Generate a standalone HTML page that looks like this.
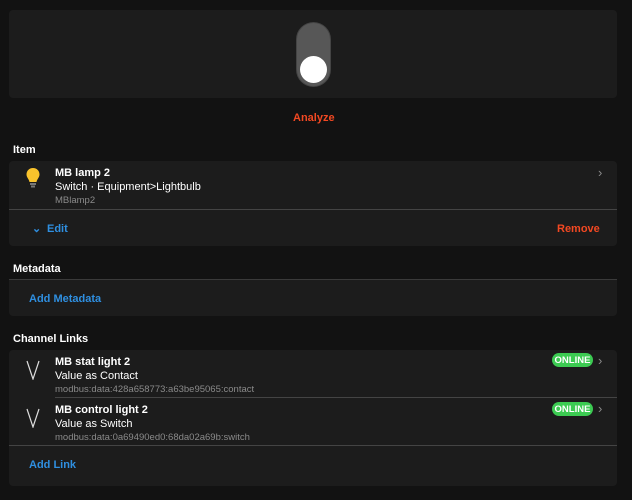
<!DOCTYPE html>
<html><head><style>
body{margin:0;width:632px;height:500px;background:#121212;font-family:"Liberation Sans",sans-serif;color:#fff;position:relative;overflow:hidden;font-size:11px}
.a{position:absolute}
.card{position:absolute;left:9px;width:608px;background:#1c1c1c;border-radius:4px}
.h{font-weight:bold;font-size:11px;left:13px}
.t{font-weight:bold;font-size:11px}
.g{color:#8a8a8a;font-size:9.5px}
.blue{color:#2f8fe0}
.hr{position:absolute;height:1px;background:#3a3a3a}
.on{position:absolute;left:552px;width:41px;height:14px;border-radius:7px;background:#3ccb52;color:#fff;font-weight:bold;font-size:9.5px;text-align:center;line-height:15px}
.chev{position:absolute;left:598px;color:#8a8a8a;font-size:13px}
</style></head><body>
<div class="card" style="top:10px;height:88px"></div>
<div class="a" style="left:297px;top:23px;width:33px;height:63px;border-radius:17px;background:#575757;box-shadow:0 0 0 1px #444"></div>
<div class="a" style="left:300px;top:56px;width:27px;height:27px;border-radius:50%;background:#fff"></div>
<div class="a" style="left:293px;top:112px;color:#f24822;font-weight:bold;font-size:11px">Analyze</div>

<div class="a h" style="top:144px">Item</div>
<div class="card" style="top:161px;height:85px"></div>
<svg class="a" style="left:25px;top:167px" width="16" height="22" viewBox="0 0 16 22"><path d="M8 1C4 1 1.5 4 1.5 7.5c0 3 2.5 4.5 3 7.5h7c.5-3 3-4.5 3-7.5C14.5 4 12 1 8 1z" fill="#f9c32c"/><rect x="5" y="16" width="6" height="2" fill="#777"/><rect x="6" y="18.5" width="4" height="2" fill="#777"/></svg>
<div class="a t" style="left:55px;top:167px">MB lamp 2</div>
<div class="a" style="left:55px;top:181px">Switch · Equipment&gt;Lightbulb</div>
<div class="a g" style="left:55px;top:195px">MBlamp2</div>
<div class="chev" style="top:165px">›</div>
<div class="hr" style="left:9px;width:608px;top:209px;background:#444"></div>
<div class="a blue" style="left:32px;top:222px;font-weight:bold">⌄</div>
<div class="a blue" style="left:47px;top:223px;font-weight:bold">Edit</div>
<div class="a" style="left:557px;top:223px;color:#f24822;font-weight:bold">Remove</div>

<div class="a h" style="top:263px">Metadata</div>
<div class="hr" style="left:9px;width:608px;top:279px;background:#3a3a3a"></div>
<div class="card" style="top:280px;height:36px;border-radius:0 0 4px 4px"></div>
<div class="a blue" style="left:29px;top:293px;font-weight:bold">Add Metadata</div>

<div class="a h" style="top:333px">Channel Links</div>
<div class="card" style="top:350px;height:136px"></div>
<svg class="a" style="left:26px;top:360px" width="14" height="20"><path d="M1 1L7 19L13 1" fill="none" stroke="#ddd" stroke-width="1.2"/></svg>
<div class="a t" style="left:55px;top:356px">MB stat light 2</div>
<div class="a" style="left:55px;top:370px">Value as Contact</div>
<div class="a g" style="left:55px;top:384px">modbus:data:428a658773:a63be95065:contact</div>
<div class="on" style="top:353px">ONLINE</div>
<div class="chev" style="top:353px">›</div>
<div class="hr" style="left:55px;width:562px;top:397px;background:#444"></div>
<svg class="a" style="left:26px;top:408px" width="14" height="20"><path d="M1 1L7 19L13 1" fill="none" stroke="#ddd" stroke-width="1.2"/></svg>
<div class="a t" style="left:55px;top:404px">MB control light 2</div>
<div class="a" style="left:55px;top:418px">Value as Switch</div>
<div class="a g" style="left:55px;top:432px">modbus:data:0a69490ed0:68da02a69b:switch</div>
<div class="on" style="top:402px">ONLINE</div>
<div class="chev" style="top:401px">›</div>
<div class="hr" style="left:9px;width:608px;top:445px;background:#444"></div>
<div class="a blue" style="left:29px;top:459px;font-weight:bold">Add Link</div>
</body></html>
